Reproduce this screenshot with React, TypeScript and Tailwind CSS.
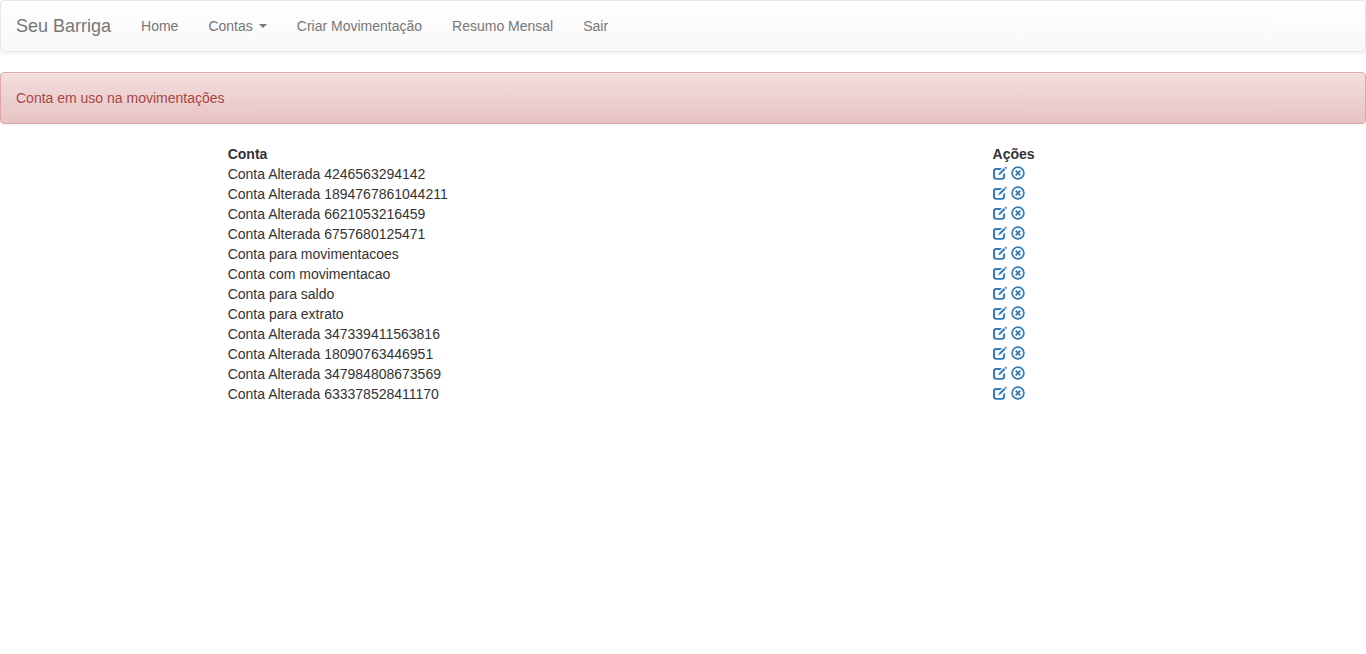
const contas: string[] = [
  "Conta Alterada 4246563294142",
  "Conta Alterada 1894767861044211",
  "Conta Alterada 6621053216459",
  "Conta Alterada 6757680125471",
  "Conta para movimentacoes",
  "Conta com movimentacao",
  "Conta para saldo",
  "Conta para extrato",
  "Conta Alterada 347339411563816",
  "Conta Alterada 18090763446951",
  "Conta Alterada 347984808673569",
  "Conta Alterada 633378528411170",
];

function EditIcon() {
  return (
    <svg className="size-3.5" viewBox="0 0 14 14" fill="currentColor" aria-hidden="true">
      <path d="M3.2 2H9L7.2 3.9H3.4Q2 3.9 2 5.3V10.6Q2 12 3.4 12H8.7Q10.1 12 10.1 10.6V8.6L12 6.7V10.6Q12 13.8 8.8 13.8H3.2Q0 13.8 0 10.6V5.2Q0 2 3.2 2Z" />
      <path d="M11 2.1L12.4 3.5L7.7 8.2L4.9 9.6L6.3 6.8ZM11.6 1.5L12.3 .8Q12.6 .5 12.9 .8L13.8 1.7Q14 2 13.7 2.3L13 2.9Z" />
    </svg>
  );
}

function RemoveIcon() {
  return (
    <svg className="size-3.5" viewBox="0 0 14 14" fill="none" stroke="currentColor" aria-hidden="true">
      <circle cx="7" cy="7" r="5.9" strokeWidth="1.7" />
      <path d="M4.7 4.7L9.3 9.3M9.3 4.7L4.7 9.3" strokeWidth="1.9" />
    </svg>
  );
}

const linkClass = "block p-[15px] text-[#777] hover:text-[#333]";

export default function App() {
  return (
    <div className="font-['Liberation_Sans',Arial,sans-serif] text-sm leading-5 text-[#333]">
      <nav className="mb-5 flex rounded border border-[#e7e7e7] bg-linear-to-b from-white to-[#f8f8f8] shadow-[inset_0_1px_0_rgba(255,255,255,.15),0_1px_5px_rgba(0,0,0,.075)]">
        <a href="#" className="block p-[15px] text-lg leading-5 text-[#777]">
          Seu Barriga
        </a>
        <ul className="flex">
          <li>
            <a href="#home" className={linkClass}>Home</a>
          </li>
          <li>
            <button type="button" aria-haspopup="true" className="flex items-center gap-1.5 p-[15px] text-[#777] hover:text-[#333]">
              Contas
              <span className="border-x-4 border-t-4 border-x-transparent border-t-current" />
            </button>
          </li>
          <li>
            <a href="#movimentacao" className={linkClass}>Criar Movimentação</a>
          </li>
          <li>
            <a href="#extrato" className={linkClass}>Resumo Mensal</a>
          </li>
          <li>
            <a href="#sair" className={linkClass}>Sair</a>
          </li>
        </ul>
      </nav>

      <div
        role="alert"
        className="mb-5 rounded border border-[#dca7a7] bg-linear-to-b from-[#f2dede] to-[#e7c3c3] p-[15px] text-[#a94442] shadow-[inset_0_1px_0_rgba(255,255,255,.25),0_1px_2px_rgba(0,0,0,.05)] [text-shadow:0_1px_0_rgba(255,255,255,.2)]"
      >
        Conta em uso na movimentações
      </div>

      <table className="mx-auto w-2/3 table-fixed">
        <thead>
          <tr>
            <th className="w-[84%] p-0 text-left">Conta</th>
            <th className="p-0 text-left">Ações</th>
          </tr>
        </thead>
        <tbody>
          {contas.map((conta) => (
            <tr key={conta}>
              <td className="p-0">{conta}</td>
              <td className="p-0">
                <div className="flex h-5 items-start gap-1 pt-0.5 text-[#337ab7]">
                  <a href="#editar" aria-label={`Editar ${conta}`}>
                    <EditIcon />
                  </a>
                  <a href="#remover" aria-label={`Remover ${conta}`}>
                    <RemoveIcon />
                  </a>
                </div>
              </td>
            </tr>
          ))}
        </tbody>
      </table>
    </div>
  );
}
